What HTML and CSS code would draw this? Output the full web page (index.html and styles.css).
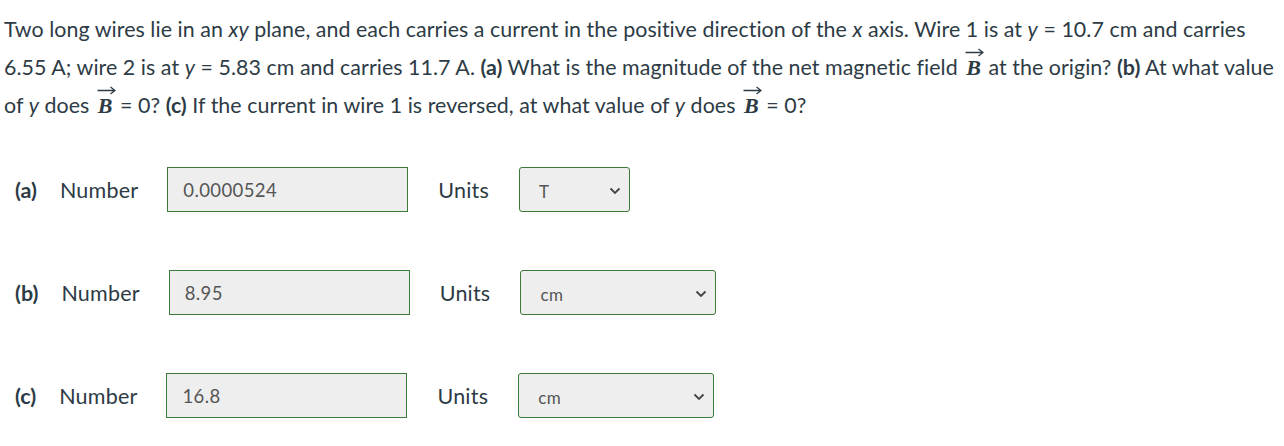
FILE: index.html
```html
<!DOCTYPE html>
<html lang="en">
<head>
<meta charset="utf-8">
<title>Magnetic field question</title>
<link rel="stylesheet" href="styles.css">
</head>
<body>
<div class="question">
  <p class="prompt">Two long wires lie in an <i>xy</i> plane, and each carries a current in the positive direction of the <i>x</i> axis. Wire 1 is at <i>y</i> = 10.7 cm and carries 6.55 A; wire 2 is at <i>y</i> = 5.83 cm and carries 11.7 A. <b>(a)</b> What is the magnitude of the net magnetic field <span class="vec"><svg class="arrow" width="19" height="9" viewBox="0 0 19 9"><path d="M0.5 4.5 H17.5 M13.5 1 L18 4.5 L13.5 8" fill="none" stroke="#2d3b45" stroke-width="1.3"/></svg>B</span> at the origin? <b>(b)</b> At what value of <i>y</i> does <span class="vec"><svg class="arrow" width="19" height="9" viewBox="0 0 19 9"><path d="M0.5 4.5 H17.5 M13.5 1 L18 4.5 L13.5 8" fill="none" stroke="#2d3b45" stroke-width="1.3"/></svg>B</span> = 0? <b>(c)</b> If the current in wire 1 is reversed, at what value of <i>y</i> does <span class="vec"><svg class="arrow" width="19" height="9" viewBox="0 0 19 9"><path d="M0.5 4.5 H17.5 M13.5 1 L18 4.5 L13.5 8" fill="none" stroke="#2d3b45" stroke-width="1.3"/></svg>B</span> = 0?</p>

  <div class="answers">
    <div class="row">
      <span class="part">(a)</span>
      <span class="label">Number</span>
      <div class="input">0.0000524</div>
      <span class="units">Units</span>
      <div class="select select-short"><span>T</span><svg class="chev" width="12" height="8" viewBox="0 0 12 8"><path d="M1.5 1.5 L6 6 L10.5 1.5" fill="none" stroke="#444" stroke-width="1.8"/></svg></div>
    </div>
    <div class="row">
      <span class="part">(b)</span>
      <span class="label">Number</span>
      <div class="input">8.95</div>
      <span class="units">Units</span>
      <div class="select"><span>cm</span><svg class="chev" width="12" height="8" viewBox="0 0 12 8"><path d="M1.5 1.5 L6 6 L10.5 1.5" fill="none" stroke="#444" stroke-width="1.8"/></svg></div>
    </div>
    <div class="row">
      <span class="part">(c)</span>
      <span class="label">Number</span>
      <div class="input">16.8</div>
      <span class="units">Units</span>
      <div class="select"><span>cm</span><svg class="chev" width="12" height="8" viewBox="0 0 12 8"><path d="M1.5 1.5 L6 6 L10.5 1.5" fill="none" stroke="#444" stroke-width="1.8"/></svg></div>
    </div>
  </div>
</div>
</body>
</html>
```

FILE: styles.css
```css
html, body {
  margin: 0;
  padding: 0;
  background: #ffffff;
}

body {
  font-family: Lato, "Open Sans", sans-serif;
  color: #2d3b45;
}

.question {
  padding: 10px 0 0 4px;
}

.prompt {
  margin: 0;
  font-size: 21.4px;
  line-height: 38px;
  letter-spacing: 0.05px;
}

.prompt b {
  font-weight: 700;
  letter-spacing: 0;
}

.vec {
  position: relative;
  display: inline-block;
  font-family: "Liberation Serif", "Times New Roman", serif;
  font-style: italic;
  font-weight: 700;
  font-size: 22px;
  line-height: 1;
  letter-spacing: 0;
  margin: 0 2px 0 3px;
}

.arrow {
  position: absolute;
  left: -1px;
  top: -9px;
  display: block;
}

.answers {
  margin-top: 43px;
  padding-left: 11px;
  display: flex;
  flex-direction: column;
  gap: 58px;
}

.row {
  display: flex;
  align-items: center;
  height: 45px;
  font-size: 21.5px;
  letter-spacing: 0.2px;
}

.part {
  font-weight: 700;
  letter-spacing: 0;
  margin-right: 23px;
}

.label {
  margin-right: 29px;
}

.input {
  box-sizing: border-box;
  width: 241px;
  height: 45px;
  border: 1px solid #3c7a37;
  background: #eeeeee;
  color: #555555;
  font-size: 18.5px;
  letter-spacing: 0.4px;
  display: flex;
  align-items: center;
  padding-left: 15px;
  margin-right: 30px;
}

.units {
  margin-right: 30px;
}

.select {
  box-sizing: border-box;
  width: 196px;
  height: 45px;
  border: 1px solid #3c7a37;
  border-radius: 3px;
  background: #eeeeee;
  color: #555555;
  font-size: 17px;
  letter-spacing: 0.6px;
  display: flex;
  align-items: center;
  justify-content: space-between;
  padding: 3px 8px 0 19px;
}

.select-short {
  width: 111px;
}

.chev {
  display: block;
}
```
